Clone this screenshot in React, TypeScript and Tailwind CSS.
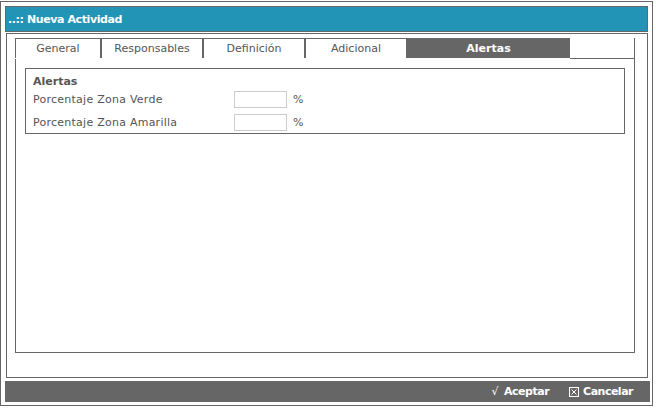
import React from "react";

const tabs = ["General", "Responsables", "Definición", "Adicional", "Alertas"];

const tabWidths: Record<string, string> = {
  General: "w-[86px]",
  Responsables: "w-[102px]",
  Definición: "w-[102px]",
  Adicional: "w-[102px]",
  Alertas: "w-[163px]",
};

type RowProps = { label: string };

const PercentRow: React.FC<RowProps> = ({ label }) => (
  <div className="flex items-center h-[23px]">
    <span className="w-[201px] text-[#555] tracking-[0.25px]">{label}</span>
    <input
      type="text"
      className="w-[53px] h-[17px] border border-[#ccc] bg-white outline-none"
    />
    <span className="ml-[6px] text-[#555]">%</span>
  </div>
);

const BoxX = () => (
  <svg width="10" height="10" viewBox="0 0 10 10" className="mr-[4px]">
    <rect x="0.5" y="0.5" width="9" height="9" fill="none" stroke="white" strokeWidth="1" />
    <path d="M2.5 2.5 L7.5 7.5 M7.5 2.5 L2.5 7.5" stroke="white" strokeWidth="1" />
  </svg>
);

export default function App() {
  const active = "Alertas";

  return (
    <div
      className="w-[653px] h-[405px] mt-px border border-[#666] bg-white text-[11px] leading-none"
      style={{ fontFamily: '"DejaVu Sans", Verdana, sans-serif' }}
    >
      <div className="ml-[4px] mt-[4px] w-[643px] h-[26px] border border-[#666] bg-[#2295b7] flex items-center pl-[2px]">
        <span className="text-white font-bold text-[11px] tracking-[-0.4px]">..:: Nueva Actividad</span>
      </div>

      <div className="ml-[5px] mt-px w-[642px] h-[345px] border border-[#666] pt-[4px] pl-[8px]">
        <div className="w-[620px] flex h-[21px]">
          {tabs.map((t) => (
            <div
              key={t}
              className={
                t === active
                  ? `${tabWidths[t]} h-[20px] bg-[#666] text-white font-bold flex items-center justify-center`
                  : `${tabWidths[t]} h-[20px] border-x border-t border-[#666] text-[#555] flex items-center justify-center`
              }
            >
              {t}
            </div>
          ))}
          <div className="flex-1 border-b border-r border-[#666] h-[21px]" />
        </div>
        <div className="w-[620px] h-[294px] border-x border-b border-[#666] pt-[9px] px-[9px]">
          <div className="h-[66px] border border-[#666] pl-[7px] pt-[5px]">
            <div className="font-bold text-[#555] h-[14px] flex items-center">Alertas</div>
            <PercentRow label="Porcentaje Zona Verde" />
            <PercentRow label="Porcentaje Zona Amarilla" />
          </div>
        </div>
      </div>

      <div className="ml-[4px] mt-[3px] w-[645px] h-[21px] bg-[#666] flex items-center justify-end pr-[17px] text-white font-bold tracking-[-0.5px]">
        <span className="font-normal mr-[6px]">√</span>
        <span>Aceptar</span>
        <span className="ml-[20px]" />
        <BoxX />
        <span>Cancelar</span>
      </div>
    </div>
  );
}
